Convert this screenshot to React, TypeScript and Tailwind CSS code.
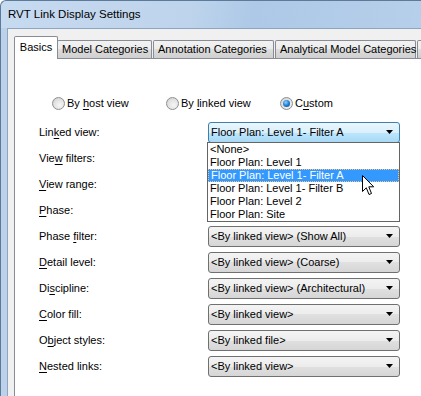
import React from "react";

const F = "font-['Liberation_Sans',Arial,sans-serif]";

function U({ pre, u, post }: { pre: string; u: string; post: string }) {
  return (
    <span className="whitespace-pre">
      {pre}
      <span className="underline underline-offset-2">{u}</span>
      {post}
    </span>
  );
}

function Arrow() {
  return (
    <svg width="7" height="4" viewBox="0 0 7 4" className="shrink-0">
      <path d="M0 0 L7 0 L3.5 4 Z" fill="#000" />
    </svg>
  );
}

function Combo({ text, focused }: { text: string; focused?: boolean }) {
  return (
    <div
      className={
        "flex h-[21px] w-[192px] items-center justify-between rounded-[3px] border pl-[2px] pr-[6px] " +
        (focused
          ? "border-[#3c7fb1] bg-[linear-gradient(#eaf6fd_0%,#d9f0fc_50%,#bee6fd_50%,#a7d9f5_100%)]"
          : "border-[#707070] bg-[linear-gradient(#f4f4f4_0%,#ececec_50%,#e0e0e0_50%,#d6d6d6_100%)]")
      }
    >
      <span className="whitespace-pre">{text}</span>
      <Arrow />
    </div>
  );
}

function Radio({ checked }: { checked?: boolean }) {
  return (
    <div className="flex h-[13px] w-[13px] items-center justify-center rounded-full border border-[#8e8f8f] bg-[radial-gradient(circle_at_60%_65%,#f6f6f6_0%,#e2e2e2_55%,#c8c8c8_100%)]">
      {checked && (
        <div className="h-[7px] w-[7px] rounded-full bg-[radial-gradient(circle_at_40%_35%,#8fd2ff_0%,#1f7fd6_50%,#0b3c78_100%)]" />
      )}
    </div>
  );
}

function Row({ label, children }: { label: React.ReactNode; children?: React.ReactNode }) {
  return (
    <div className="flex h-[26px] items-center">
      <div className="w-[169px]">{label}</div>
      <div className="relative">{children}</div>
    </div>
  );
}

const items = [
  "<None>",
  "Floor Plan: Level 1",
  "Floor Plan: Level 1- Filter A",
  "Floor Plan: Level 1- Filter B",
  "Floor Plan: Level 2",
  "Floor Plan: Site",
];

const tabBg =
  "bg-[linear-gradient(#f2f2f2_0%,#ebebeb_50%,#dddddd_50%,#cfcfcf_100%)]";

export default function App() {
  return (
    <div className={"flex h-[396px] w-[421px] flex-col overflow-hidden text-[11px] text-black " + F}>
      {/* title bar */}
      <div className="flex h-[28px] shrink-0 items-center rounded-tl-[6px] border-l border-t border-[#5e7a99] bg-[linear-gradient(100deg,#c6daf0_0%,#bed4ec_45%,#adc9e7_60%,#b6cfea_100%)] pl-[7px]">
        <span className="text-[11.5px] text-black">RVT Link Display Settings</span>
      </div>
      <div className="flex min-h-0 flex-1">
        {/* left frame */}
        <div className="w-[8px] shrink-0 border-l border-r border-l-[#5e7a99] border-r-[#8ea5c0] bg-[#bcd2ea]" />
        {/* client */}
        <div className="flex min-h-0 flex-1 flex-col border-t border-[#8ea5c0] bg-[#f0f0f0] pl-[6px] pt-[8px]">
          {/* tabs */}
          <div className="relative z-10 flex h-[21px] items-end">
            <div className="-mb-px flex h-[23px] w-[44px] items-center justify-center rounded-t-[2px] border border-b-0 border-[#898c95] bg-white pb-[1px]">
              Basics
            </div>
            {[
              ["Model Categories", "w-[95px]"],
              ["Annotation Categories", "w-[121px]"],
              ["Analytical Model Categories", "w-[141px]"],
            ].map(([t, w], i) => (
              <div
                key={t}
                className={
                  "flex h-[18px] shrink-0 items-center rounded-t-[2px] border border-b-0 border-[#898c95] pl-[4px] " +
                  tabBg +
                  " " +
                  w +
                  (i === 0 ? " -ml-px" : " ml-px")
                }
              >
                <span className="whitespace-pre">{t}</span>
              </div>
            ))}
            <div
              className={
                "ml-px h-[18px] w-[40px] shrink-0 rounded-t-[2px] border border-b-0 border-[#898c95] " + tabBg
              }
            />
          </div>
          {/* panel */}
          <div className="flex-1 border border-r-0 border-b-0 border-[#898c95] bg-white">
            <div className="mt-[36px] flex h-[16px] items-center pl-[37px]">
              <div className="flex w-[114px] items-center gap-[2px]">
                <Radio />
                <U pre="By " u="h" post="ost view" />
              </div>
              <div className="flex w-[114px] items-center gap-[2px]">
                <Radio />
                <U pre="By " u="l" post="inked view" />
              </div>
              <div className="flex items-center gap-[2px]">
                <Radio checked />
                <U pre="C" u="u" post="stom" />
              </div>
            </div>
            <div className="mt-[8px] pl-[24px]">
              <Row label={<U pre="Lin" u="k" post="ed view:" />}>
                <Combo text="Floor Plan: Level 1- Filter A" focused />
                <div className="absolute left-[-1px] top-[20px] z-20 w-[193px] border border-[#646464] bg-white">
                  {items.map((it, i) => (
                    <div
                      key={it}
                      className={
                        "flex h-[13px] items-center whitespace-pre pl-[2px] " +
                        (i === 2
                          ? "border border-dotted border-[#f6c27c] bg-[#3399ff] pl-[1px] text-white"
                          : "")
                      }
                    >
                      {it}
                    </div>
                  ))}
                </div>
                <svg
                  className="absolute left-[154px] top-[53px] z-30"
                  width="13"
                  height="21"
                  viewBox="0 0 13 21"
                >
                  <path
                    d="M0.5 0.5 L0.5 16.5 L4.3 12.8 L7 19.5 L9.5 18.5 L6.8 11.8 L11.7 11.8 Z"
                    fill="#fff"
                    stroke="#000"
                    strokeWidth="1"
                    strokeLinejoin="miter"
                  />
                </svg>
              </Row>
              <Row label={<U pre="Vie" u="w" post=" filters:" />} />
              <Row label={<U pre="" u="V" post="iew range:" />} />
              <Row label={<U pre="" u="P" post="hase:" />} />
              <Row label={<U pre="Phase " u="f" post="ilter:" />}>
                <Combo text="<By linked view> (Show All)" />
              </Row>
              <Row label={<U pre="" u="D" post="etail level:" />}>
                <Combo text="<By linked view> (Coarse)" />
              </Row>
              <Row label={<U pre="Di" u="s" post="cipline:" />}>
                <Combo text="<By linked view> (Architectural)" />
              </Row>
              <Row label={<U pre="" u="C" post="olor fill:" />}>
                <Combo text="<By linked view>" />
              </Row>
              <Row label={<U pre="O" u="b" post="ject styles:" />}>
                <Combo text="<By linked file>" />
              </Row>
              <Row label={<U pre="" u="N" post="ested links:" />}>
                <Combo text="<By linked view>" />
              </Row>
            </div>
          </div>
        </div>
      </div>
    </div>
  );
}
